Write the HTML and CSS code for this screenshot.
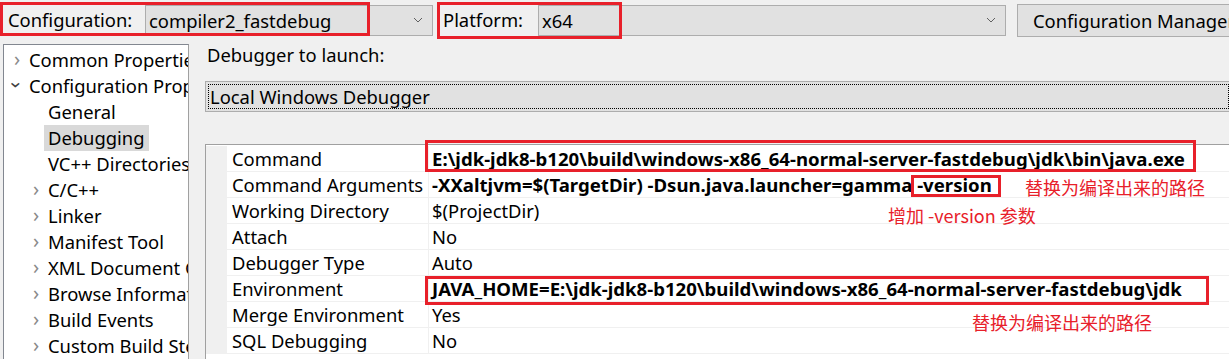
FILE: index.html
```html
<!DOCTYPE html>
<html>
<head>
    <title>Debugging Property Pages</title>
    <link rel="stylesheet" href="styles.css">
</head>
<body>
    <div class="page">
        <div class="topbar">
            <span class="lbl lbl-config">Configuration:</span>
            <div class="combo combo-config">
                <span>compiler2_fastdebug</span>
                <svg class="arrow" width="10" height="6" viewBox="0 0 10 6"><path d="M1 1 L5 5 L9 1" fill="none" stroke="#606060" stroke-width="1"/></svg>
            </div>
            <span class="lbl lbl-platform">Platform:</span>
            <div class="combo combo-platform">
                <span>x64</span>
                <svg class="arrow" width="10" height="6" viewBox="0 0 10 6"><path d="M1 1 L5 5 L9 1" fill="none" stroke="#606060" stroke-width="1"/></svg>
            </div>
            <div class="btn">Configuration Manager</div>
        </div>

        <div class="main">
            <ul class="tree">
                <li class="top"><span class="chev">&#x203A;</span>Common Properties</li>
                <li class="top"><span class="chev open">&#x203A;</span>Configuration Properties</li>
                <li class="child">General</li>
                <li class="child"><span class="sel">Debugging</span></li>
                <li class="child">VC++ Directories</li>
                <li class="child"><span class="chev">&#x203A;</span>C/C++</li>
                <li class="child"><span class="chev">&#x203A;</span>Linker</li>
                <li class="child"><span class="chev">&#x203A;</span>Manifest Tool</li>
                <li class="child"><span class="chev">&#x203A;</span>XML Document Generator</li>
                <li class="child"><span class="chev">&#x203A;</span>Browse Information</li>
                <li class="child"><span class="chev">&#x203A;</span>Build Events</li>
                <li class="child"><span class="chev">&#x203A;</span>Custom Build Step</li>
            </ul>

            <div class="content">
                <div class="launch-label">Debugger to launch:</div>
                <div class="launch-box"><div class="focus">Local Windows Debugger</div></div>

                <div class="grid">
                    <div class="row"><div class="gut"></div><div class="name">Command</div><div class="val bold">E:\jdk-jdk8-b120\build\windows-x86_64-normal-server-fastdebug\jdk\bin\java.exe</div></div>
                    <div class="row"><div class="gut"></div><div class="name">Command Arguments</div><div class="val bold">-XXaltjvm=$(TargetDir) -Dsun.java.launcher=gamma -version</div></div>
                    <div class="row"><div class="gut"></div><div class="name">Working Directory</div><div class="val">$(ProjectDir)</div></div>
                    <div class="row"><div class="gut"></div><div class="name">Attach</div><div class="val">No</div></div>
                    <div class="row"><div class="gut"></div><div class="name">Debugger Type</div><div class="val">Auto</div></div>
                    <div class="row"><div class="gut"></div><div class="name">Environment</div><div class="val bold">JAVA_HOME=E:\jdk-jdk8-b120\build\windows-x86_64-normal-server-fastdebug\jdk</div></div>
                    <div class="row"><div class="gut"></div><div class="name">Merge Environment</div><div class="val">Yes</div></div>
                    <div class="row"><div class="gut"></div><div class="name">SQL Debugging</div><div class="val">No</div></div>
                </div>
            </div>
        </div>

        <!-- red annotations drawn over the screenshot -->
        <div class="mark mark-config"></div>
        <div class="mark mark-platform"></div>
        <div class="mark mark-command"></div>
        <div class="mark mark-version"></div>
        <div class="mark mark-env"></div>
        <div class="note note-1">替换为编译出来的路径</div>
        <div class="note note-2">增加 -version 参数</div>
        <div class="note note-3">替换为编译出来的路径</div>
    </div>
</body>
</html>
```

FILE: styles.css
```css
body {
    margin: 0;
    background-color: #f0f0f0;
    font-family: "Noto Sans", "Noto Sans CJK SC", sans-serif;
    font-size: 18.4px;
    color: #000;
    overflow: hidden;
}

.page {
    position: relative;
    width: 1229px;
    height: 359px;
    overflow: hidden;
}

.topbar {
    display: flex;
    align-items: center;
    height: 40px;
}

.topbar > * {
    flex-shrink: 0;
}

.lbl {
    line-height: 30px;
}

.lbl-config {
    margin-left: 8px;
    width: 137px;
}

.lbl-platform {
    margin-left: 10px;
    width: 95px;
}

.combo {
    display: flex;
    align-items: center;
    justify-content: space-between;
    box-sizing: border-box;
    height: 31px;
    background-color: #e1e1e1;
    border: 1px solid #adadad;
    padding: 0 9px 0 3px;
}

.combo-config {
    width: 288px;
}

.combo-platform {
    width: 468px;
}

.btn {
    box-sizing: border-box;
    height: 33px;
    margin-left: 11px;
    padding: 0 15px;
    line-height: 31px;
    background-color: #e1e1e1;
    border: 1px solid #adadad;
    white-space: nowrap;
}

.main {
    display: flex;
    margin-top: 4px;
}

.tree {
    list-style: none;
    margin: 0 0 0 3px;
    padding: 2px 0 0 0;
    box-sizing: border-box;
    width: 186px;
    height: 320px;
    background-color: #fff;
    border: 1px solid #828790;
    border-right-color: #a0a0a0;
    overflow: hidden;
    flex-shrink: 0;
}

.tree li {
    position: relative;
    height: 26px;
    line-height: 26px;
    white-space: nowrap;
}

.tree .top {
    padding-left: 25px;
}

.tree .child {
    padding-left: 44px;
}

.chev {
    position: absolute;
    top: 0;
    width: 12px;
    text-align: center;
    color: #8a8a8a;
    font-size: 20px;
    line-height: 24px;
}

.top .chev {
    left: 7px;
}

.child .chev {
    left: 26px;
}

.chev.open {
    transform: rotate(90deg);
    color: #404040;
}

.sel {
    display: inline-block;
    background-color: #d9d9d9;
    padding: 0 4px;
    margin-left: -4px;
}

.content {
    flex: 1;
    margin-left: 16px;
}

.launch-label {
    height: 26px;
    line-height: 26px;
    padding-left: 2px;
    margin-top: -2px;
}

.launch-box {
    box-sizing: border-box;
    height: 31px;
    margin-top: 13px;
    background-color: #e1e1e1;
    border: 1px solid #adadad;
    border-right: none;
    padding: 2px 0 2px 2px;
}

.focus {
    height: 23px;
    line-height: 23px;
    border: 1px dotted #000;
    padding-left: 1px;
}

.grid {
    margin-top: 32px;
    border-top: 1px solid #a0a0a0;
    border-left: 1px solid #a0a0a0;
    padding-top: 1px;
    background-color: #fff;
    height: 220px;
}

.row {
    display: grid;
    grid-template-columns: 21px 202px 1fr;
    height: 26px;
    border-bottom: 1px solid #f0f0f0;
    box-sizing: border-box;
}

.gut {
    background-color: #f0f0f0;
}

.name {
    padding-left: 5px;
    line-height: 25px;
    border-right: 1px solid #f0f0f0;
    white-space: nowrap;
}

.val {
    padding-left: 3px;
    line-height: 25px;
    white-space: nowrap;
}

.bold {
    font-weight: bold;
    font-size: 18.6px;
}

.mark {
    position: absolute;
    border: 3px solid #e8202a;
    box-sizing: border-box;
}

.mark-config {
    left: 0;
    top: 2px;
    width: 370px;
    height: 34px;
}

.mark-platform {
    left: 437px;
    top: 2px;
    width: 185px;
    height: 37px;
}

.mark-command {
    left: 425px;
    top: 140px;
    width: 771px;
    height: 32px;
}

.mark-version {
    left: 911px;
    top: 175px;
    width: 90px;
    height: 22px;
}

.mark-env {
    left: 425px;
    top: 276px;
    width: 784px;
    height: 29px;
}

.note {
    position: absolute;
    color: #e8202a;
    font-family: "Noto Sans CJK SC", sans-serif;
    font-size: 18px;
    line-height: 22px;
    white-space: nowrap;
}

.note-1 {
    left: 1025px;
    top: 176px;
}

.note-2 {
    left: 888px;
    top: 204px;
}

.note-3 {
    left: 972px;
    top: 311px;
}
```
